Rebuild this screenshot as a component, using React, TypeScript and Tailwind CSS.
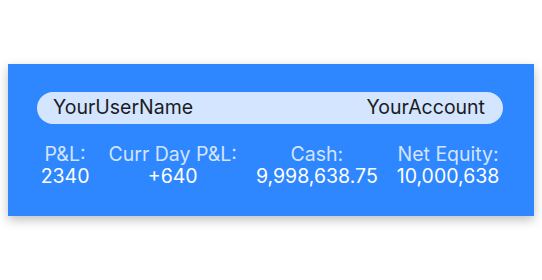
export default function App() {
  const stats = [
    { label: "P&L:", value: "2340" },
    { label: "Curr Day P&L:", value: "+640" },
    { label: "Cash:", value: "9,998,638.75" },
    { label: "Net Equity:", value: "10,000,638" },
  ];
  return (
    <div className="w-[542px] h-[280px] bg-white pt-[64px] px-[8px]" style={{ fontFamily: "Inter, 'Noto Sans', sans-serif" }}>
      <div className="h-[152px] bg-[#2e87fe] shadow-[0_4px_10px_rgba(0,0,0,0.25)] pt-[28px]">
        <div className="ml-[29px] mr-[31px] h-[32px] rounded-full bg-[#d3e5ff] pl-[16px] pr-[18px] flex items-center justify-between text-[19.5px] text-[#1c1c1e]">
          <span>YourUserName</span>
          <span>YourAccount</span>
        </div>
        <div className="mt-[19px] flex justify-center gap-[19px] pr-[2px] text-[19.5px] leading-[22px]">
          {stats.map((s) => (
            <div key={s.label} className="flex flex-col items-center">
              <span className="text-[#d3e4ff]">{s.label}</span>
              <span className="text-white">{s.value}</span>
            </div>
          ))}
        </div>
      </div>
    </div>
  );
}
